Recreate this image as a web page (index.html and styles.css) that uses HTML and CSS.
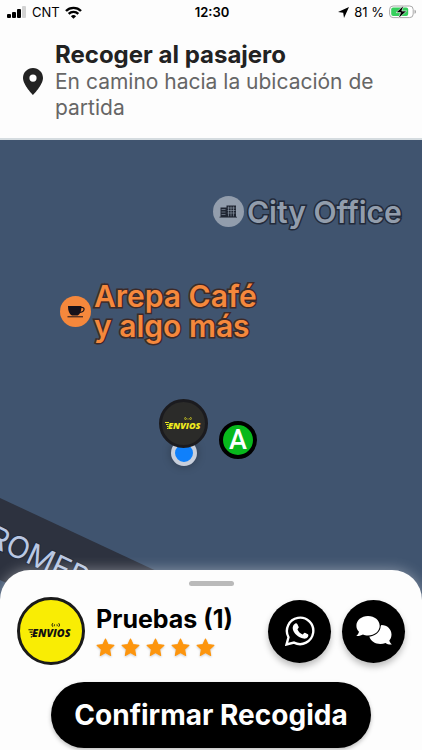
FILE: index.html
```html
<!DOCTYPE html>
<html lang="es">
<head>
	<meta charset="UTF-8">
	<meta name="viewport" content="width=device-width, initial-scale=1">
	<title>Recoger al pasajero</title>
	<link rel="stylesheet" href="styles.css">
</head>
<body>
	<div class="status">
		<div class="status-side">
			<svg width="20" height="12" viewBox="0 0 20 12">
				<rect x="0" y="8" width="4" height="4" rx="1"/>
				<rect x="5" y="6" width="4" height="6" rx="1"/>
				<rect x="10" y="3" width="4" height="9" rx="1"/>
				<rect x="15" y="0" width="4" height="12" rx="1" fill="#d2d2d2"/>
			</svg>
			<span class="carrier">CNT</span>
			<svg width="17" height="13" viewBox="0 0 17 13" fill="none" stroke="#000" stroke-width="2.4">
				<path d="M1 5a10.600 10.600 0 0 1 15 0"/>
				<path d="M3.700 7.900a6.800 6.800 0 0 1 9.600 0"/>
				<path d="M8.500 12.800L5.900 10.200a3.700 3.700 0 0 1 5.200 0z" fill="#000" stroke="none"/>
			</svg>
		</div>
		<time class="clock">12:30</time>
		<div class="status-side status-right">
			<svg width="11" height="11" viewBox="0 0 11 11"><path d="M11 0L0 5l5.200.8L6 11z"/></svg>
			<span class="percent">81 %</span>
			<svg width="28" height="14" viewBox="0 0 28 14">
				<rect x=".6" y="1" width="23.600" height="11.600" rx="3.500" fill="#fff" stroke="#a9a9a9"/>
				<rect x="2.200" y="2.600" width="17" height="8.400" rx="2" fill="#35cf5c"/>
				<path d="M25.500 4.800c2 .5 2 3.500 0 4z" fill="#a9a9a9"/>
				<path d="M14.800.3L7 7.600h4.600L9.300 13.500l8.400-7.500h-4.900z" stroke="#fff" stroke-width=".6"/>
			</svg>
		</div>
	</div>

	<header class="header">
		<svg class="header-pin" width="20" height="27" viewBox="0 0 20 27">
			<path fill-rule="evenodd" d="M10 0C4.400 0 0 4.400 0 10c0 7 10 17 10 17s10-10 10-17C20 4.400 15.600 0 10 0zm0 6.500a3.600 3.600 0 1 1 0 7.200 3.600 3.600 0 0 1 0-7.200z"/>
		</svg>
		<div>
			<h1 class="title">Recoger al pasajero</h1>
			<p class="subtitle">En camino hacia la ubicación de partida</p>
		</div>
	</header>

	<main class="map">
		<svg class="road" width="240" height="140" viewBox="0 0 240 140">
			<path d="M0 0L240 112V140H120L0 82z" fill="#2d323f"/>
			<text class="road-name" transform="translate(-14 46) rotate(25)">ROMERO</text>
		</svg>

		<div class="place place-office">
			<svg width="31" height="31" viewBox="0 0 31 31">
				<circle cx="15.500" cy="15.500" r="15.500" fill="#929dac"/>
				<path d="M7.500 21V11.500h6V9.500h9.500V21z" fill="#202632"/>
				<path d="M8.500 13.500h4m-4 2.500h4m-4 2.500h4M15.500 10.500v10m2.500-10v10m2.500-10v10M14.500 12h8m-8 2.500h8m-8 2.500h8" stroke="#929dac" stroke-width=".6"/>
				<path d="M6.500 21.200h17.500" stroke="#202632" stroke-width=".8"/>
			</svg>
			<span>City Office</span>
		</div>

		<div class="place place-cafe">
			<svg width="31" height="31" viewBox="0 0 31 31">
				<circle cx="15.500" cy="15.500" r="15.500" fill="#f5883c"/>
				<path d="M8 10h13.500c0 5-1.500 8.500-4 9.500h-5.500C9.500 18.500 8 15 8 10z" fill="#17121a"/>
				<path d="M21 11.500c4-1 4.500 4-1 4.800" fill="none" stroke="#17121a" stroke-width="1.200"/>
				<path d="M7.500 20.800h15.500" stroke="#17121a"/>
			</svg>
			<span>Arepa Café<br>y algo más</span>
		</div>

		<div class="my-location"></div>
		<div class="driver">
			<svg width="38" height="16" viewBox="0 0 38 16">
				<text class="logo-text" x="3" y="13">ENVIOS</text>
				<path d="M0 6.500h4M1 8.500h2.500M2 10.500h1.500M2 12.500h1" stroke="currentColor"/>
				<path d="M20.500 1q-1.500 1.500 0 3M25.500 1q1.500 1.500 0 3M22 2q-.6.600 0 1.500M24 2q.6.600 0 1.500" fill="none" stroke="currentColor" stroke-width=".8"/>
			</svg>
		</div>
		<div class="stop">A</div>
	</main>

	<section class="sheet">
		<div class="handle"></div>
		<div class="passenger">
			<div class="avatar">
				<svg width="46" height="19" viewBox="0 0 38 16">
					<text class="logo-text" x="3" y="13">ENVIOS</text>
					<path d="M0 6.500h4M1 8.500h2.500M2 10.500h1.500M2 12.500h1" stroke="currentColor"/>
					<path d="M20.500 1q-1.500 1.500 0 3M25.500 1q1.500 1.500 0 3M22 2q-.6.600 0 1.500M24 2q.6.600 0 1.500" fill="none" stroke="currentColor" stroke-width=".8"/>
				</svg>
			</div>
			<div class="info">
				<h2 class="name">Pruebas (1)</h2>
				<div class="stars" role="img" aria-label="5 estrellas">
					<svg class="star" viewBox="0 0 18 18"><path d="M9 1l2.400 5.200 5.600.7-4.100 3.900 1 5.700L9 13.800l-4.900 2.700 1-5.700L1 6.900l5.600-.7z"/></svg>
					<svg class="star" viewBox="0 0 18 18"><path d="M9 1l2.400 5.200 5.600.7-4.100 3.900 1 5.700L9 13.800l-4.900 2.700 1-5.700L1 6.900l5.600-.7z"/></svg>
					<svg class="star" viewBox="0 0 18 18"><path d="M9 1l2.400 5.200 5.600.7-4.100 3.900 1 5.700L9 13.800l-4.900 2.700 1-5.700L1 6.900l5.600-.7z"/></svg>
					<svg class="star" viewBox="0 0 18 18"><path d="M9 1l2.400 5.200 5.600.7-4.100 3.900 1 5.700L9 13.800l-4.900 2.700 1-5.700L1 6.900l5.600-.7z"/></svg>
					<svg class="star" viewBox="0 0 18 18"><path d="M9 1l2.400 5.200 5.600.7-4.100 3.900 1 5.700L9 13.800l-4.900 2.700 1-5.700L1 6.900l5.600-.7z"/></svg>
				</div>
			</div>
			<button class="btn-round" aria-label="WhatsApp">
				<svg width="30" height="30" viewBox="0 0 30 30">
					<path d="M1.500 28.500l2-7.300A13.200 13.200 0 1 1 9 26.600z" fill="none" stroke="#fff" stroke-width="2.400"/>
					<path d="M10.300 7.500c.7-.4 1.600-.3 2 .5l1.400 3c.3.700-1.300 2.100-1.200 2.500.9 2.200 2.700 3.900 5 4.900.6.200 1.700-1.900 2.400-1.600l3 1.500c.7.400.5 1.400.2 2.100-.8 1.700-2.900 2.500-4.600 2.200-5.300-1-9.800-5-10.700-9.500-.4-2.200.5-4.600 2.500-5.600z" fill="#fff"/>
				</svg>
			</button>
			<button class="btn-round" aria-label="Chat">
				<svg width="36" height="30" viewBox="0 0 36 30">
					<path d="M25.500 9c5.700 0 10 4.200 10 9.500 0 2.600-.9 4.500-2.200 6.100.3 1.600 1.200 2.700 2.500 3.800-2.600.2-4.600-.4-6.200-1.500-6.500 2.500-14.300.2-16.300-6.500z" fill="#fff"/>
					<path d="M12 0c6.600 0 11.700 4.300 11.700 9.700S18.600 19.500 12 19.500c-2 0-3.600-.4-5-1-1.700 1-4 1.700-6.700 1.500 1.400-1.300 2.400-2.700 2.700-4.200C1.300 14 .4 12 .4 9.700.4 4.300 5.400 0 12 0z" fill="#fff" stroke="#000" stroke-width="2" paint-order="stroke"/>
				</svg>
			</button>
		</div>
		<button class="btn-confirm">Confirmar Recogida</button>
	</section>
</body>
</html>
```

FILE: styles.css
```css
* {
	box-sizing: border-box;
	margin: 0;
}

body {
	display: flex;
	flex-direction: column;
	min-height: 100vh;
	background-color: #fdfdfd;
	font-family: Inter, "Liberation Sans", sans-serif;
	color: #000;
}

svg {
	display: block;
	flex: none;
}

.status {
	display: flex;
	align-items: center;
	height: 24px;
	padding: 0 5px 0 7px;
}

.status-side {
	display: flex;
	flex: 1;
	align-items: center;
	gap: 5px;
}

.status-right {
	justify-content: flex-end;
}

.carrier,
.percent,
.clock {
	font-size: 13px;
	line-height: 16px;
}

.clock {
	font-weight: 600;
}

.header {
	display: flex;
	align-items: center;
	gap: 12px;
	min-height: 116px;
	padding: 0 23px;
	border-bottom: 2px solid #d5dce0;
	color: #222;
}

.header-pin {
	fill: #222;
}

.title {
	font-size: 24px;
	font-weight: 700;
	line-height: 28px;
}

.subtitle {
	font-size: 21px;
	line-height: 26px;
	color: #666;
}

.map {
	position: relative;
	flex: 1;
	min-height: 380px;
	overflow: hidden;
	background-color: #40546f;
}

.road {
	position: absolute;
	left: 0;
	top: 358px;
}

.road-name {
	font-size: 30px;
	fill: #b9c7e2;
	stroke: #222a3a;
	stroke-width: 2px;
	paint-order: stroke;
}

.place {
	position: absolute;
	display: flex;
	align-items: center;
	gap: 3px;
	font-size: 30px;
	font-weight: 600;
	line-height: 30px;
	white-space: nowrap;
	-webkit-text-stroke: 3px #222a3a;
	paint-order: stroke fill;
}

.place-office {
	left: 213px;
	top: 56px;
	color: #929dac;
}

.place-cafe {
	left: 60px;
	top: 141px;
	color: #f5883c;
	-webkit-text-stroke-color: #3d2a28;
}

.my-location {
	position: absolute;
	left: 171px;
	top: 300px;
	width: 26px;
	height: 26px;
	border: 4px solid #c8cfdc;
	border-radius: 50%;
	background-color: #0f80fb;
	box-shadow: 0 0 10px rgba(0, 0, 0, 0.3);
}

.driver {
	position: absolute;
	left: 159px;
	top: 259px;
	display: flex;
	align-items: center;
	justify-content: center;
	width: 49px;
	height: 49px;
	border: 3px solid #1b1b1f;
	border-radius: 50%;
	background-color: #2b2b29;
	color: #f0ea1e;
}

.logo-text {
	font-family: "Open Sans", sans-serif;
	font-size: 9px;
	font-style: italic;
	font-weight: 800;
	fill: currentColor;
}

.stop {
	position: absolute;
	left: 219px;
	top: 281px;
	width: 38px;
	height: 38px;
	border: 4px solid #000;
	border-radius: 50%;
	background-color: #08b81c;
	color: #fff;
	font-family: Roboto, sans-serif;
	font-size: 27px;
	font-weight: 500;
	line-height: 31px;
	text-align: center;
}

.sheet {
	position: relative;
	display: flex;
	flex-direction: column;
	align-items: center;
	margin-top: -30px;
	padding: 11px 17px 2px;
	border-radius: 30px 30px 0 0;
	background-color: #fdfdfd;
	box-shadow: 0 0 14px rgba(255, 255, 255, 0.4);
}

.handle {
	width: 45px;
	height: 5px;
	border-radius: 3px;
	background-color: #bababa;
}

.passenger {
	display: flex;
	align-items: center;
	width: 100%;
	margin: 11px 0 17px;
}

.avatar {
	display: flex;
	align-items: center;
	justify-content: center;
	width: 68px;
	height: 68px;
	border: 3px solid #1a1a1a;
	border-radius: 50%;
	background-color: #f9ed04;
	color: #111;
}

.info {
	flex: 1;
	padding-left: 11px;
}

.name {
	font-size: 25px;
	font-weight: 700;
	line-height: 28px;
	white-space: nowrap;
}

.stars {
	display: flex;
	gap: 6px;
	margin-top: 5px;
}

.star {
	width: 19px;
	height: 19px;
	fill: #fd950d;
	stroke: #fd950d;
	stroke-linejoin: round;
	filter: drop-shadow(0 1px 1px rgba(0, 0, 0, 0.2));
}

.btn-round {
	display: flex;
	align-items: center;
	justify-content: center;
	width: 63px;
	height: 63px;
	margin-left: 11px;
	padding: 0;
	border: 0;
	border-radius: 50%;
	background-color: #000;
	box-shadow: 0 4px 6px rgba(0, 0, 0, 0.25);
}

.btn-confirm {
	width: 100%;
	max-width: 320px;
	height: 66px;
	border: 0;
	border-radius: 33px;
	background-color: #000;
	box-shadow: 0 2px 4px rgba(0, 0, 0, 0.25);
	color: #fff;
	font-family: inherit;
	font-size: 28px;
	font-weight: 700;
}
```
